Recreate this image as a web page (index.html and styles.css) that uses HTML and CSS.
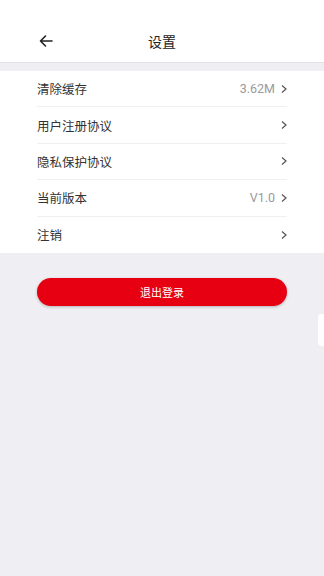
FILE: index.html
```html
<!DOCTYPE html>
<html lang="zh">
<head>
<meta charset="utf-8">
<link rel="stylesheet" href="styles.css">
</head>
<body>
<div class="page">
  <header class="topbar">
    <span class="back">
      <svg width="14" height="14" viewBox="0 0 14 14"><path d="M13 7H1.5M6.5 2L1.5 7l5 5" fill="none" stroke="#222" stroke-width="1.6" stroke-linecap="round" stroke-linejoin="round"/></svg>
    </span>
    <h1 class="title">设置</h1>
  </header>
  <div class="gap"></div>
  <ul class="list">
    <li class="row"><span class="label">清除缓存</span><span class="value">3.62M</span><span class="chev"><svg width="8" height="10" viewBox="0 0 8 10"><path d="M2 1.5L6 5 2 8.5" fill="none" stroke="#555" stroke-width="1.2"/></svg></span></li>
    <li class="row"><span class="label">用户注册协议</span><span class="value"></span><span class="chev"><svg width="8" height="10" viewBox="0 0 8 10"><path d="M2 1.5L6 5 2 8.5" fill="none" stroke="#555" stroke-width="1.2"/></svg></span></li>
    <li class="row"><span class="label">隐私保护协议</span><span class="value"></span><span class="chev"><svg width="8" height="10" viewBox="0 0 8 10"><path d="M2 1.5L6 5 2 8.5" fill="none" stroke="#555" stroke-width="1.2"/></svg></span></li>
    <li class="row"><span class="label">当前版本</span><span class="value">V1.0</span><span class="chev"><svg width="8" height="10" viewBox="0 0 8 10"><path d="M2 1.5L6 5 2 8.5" fill="none" stroke="#555" stroke-width="1.2"/></svg></span></li>
    <li class="row"><span class="label">注销</span><span class="value"></span><span class="chev"><svg width="8" height="10" viewBox="0 0 8 10"><path d="M2 1.5L6 5 2 8.5" fill="none" stroke="#555" stroke-width="1.2"/></svg></span></li>
  </ul>
  <div class="actions">
    <button class="logout">退出登录</button>
  </div>
  <div class="edge-tab"></div>
</div>
</body>
</html>
```
FILE: styles.css
```css
* { box-sizing: border-box; }
html, body { margin: 0; padding: 0; }
body {
  background: #efeff3;
  font-family: "Noto Sans CJK SC", "Noto Sans", Roboto, sans-serif;
  color: #333;
}
.page {
  position: relative;
  width: 324px;
  min-height: 576px;
  background: #efeff3;
}
.topbar {
  height: 63px;
  background: #fff;
  display: flex;
  align-items: flex-end;
  justify-content: center;
  padding-bottom: 12px;
  position: relative;
  border-bottom: 1px solid #e2e2e6;
}
.back {
  position: absolute;
  left: 39px;
  bottom: 14px;
  display: flex;
}
.title {
  margin: 0;
  font-size: 14px;
  font-weight: 400;
  color: #222;
  line-height: 18px;
}
.gap { height: 8px; }
.list {
  list-style: none;
  margin: 0;
  padding: 0 37px;
  background: #fff;
}
.row {
  height: 36.4px;
  display: flex;
  align-items: center;
  border-bottom: 1px solid #f0f0f2;
  font-size: 12.5px;
}
.row:last-child { border-bottom: none; }
.label { flex: 1; color: #333; }
.value {
  color: #9a9a9a;
  font-family: Roboto, "Noto Sans", sans-serif;
  font-size: 12.5px;
  margin-right: 5px;
}
.chev { display: flex; margin-right: -1px; }
.actions {
  padding: 25px 37px 0;
}
.logout {
  display: block;
  width: 100%;
  height: 28px;
  border: none;
  border-radius: 14px;
  background: #e60012;
  color: #fff;
  font-family: "Noto Sans CJK SC", sans-serif;
  font-size: 11px;
  box-shadow: 0 1px 3px rgba(0,0,0,0.25);
}
.edge-tab {
  position: absolute;
  right: 0;
  top: 314px;
  width: 6px;
  height: 32px;
  background: #fff;
  border-radius: 4px 0 0 4px;
}
```
